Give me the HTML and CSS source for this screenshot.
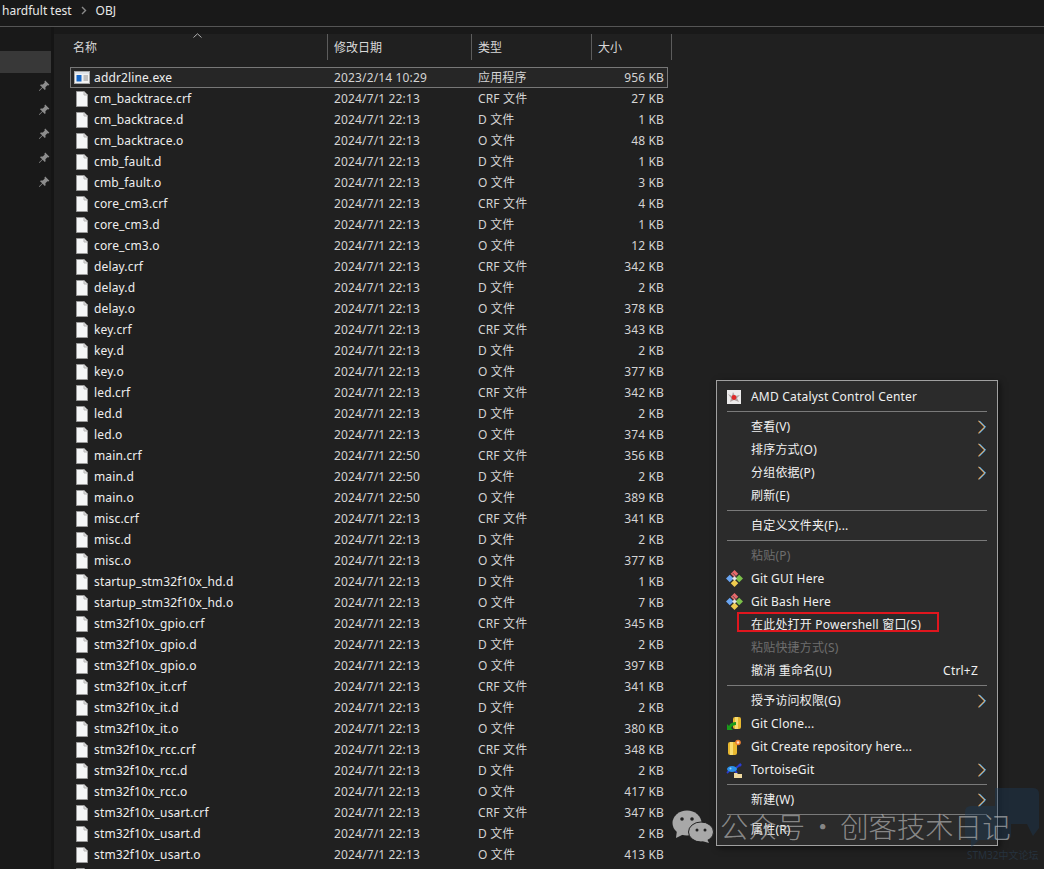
FILE: index.html
```html
<!DOCTYPE html>
<html lang="zh-CN">
<head>
  <meta charset="UTF-8">
  <title>OBJ - File Explorer</title>
  <link rel="stylesheet" href="styles.css">
</head>
<body>

<svg class="defs" width="0" height="0" aria-hidden="true">
  <symbol id="doc" viewBox="0 0 12 16">
    <path d="M.5.5H8L11.5 4V15.5H.5Z" fill="#f5f6f7" stroke="#9a9a9a"/>
    <path d="M8 .5V4H11.5" fill="#e0e0e0" stroke="#b5b5b5"/>
  </symbol>
  <symbol id="pin" viewBox="0 0 12 12">
    <path d="M7.2.6 11.4 4.8 10.3 5.6 9.4 5.2 7.4 7.2 7.6 9.2 6.8 10 4.6 7.7 1.4 11 .9 10.6 4.2 7.3 2 5.2 2.8 4.4 4.8 4.6 6.8 2.6 6.4 1.7Z" fill="#8d8d8d"/>
  </symbol>
  <symbol id="chev" viewBox="0 0 8 14">
    <path d="M.8 .8 7 7 .8 13.200" fill="none" stroke="#ee9a3a" stroke-width="1" transform="translate(-.6 0)"/>
    <path d="M.8 .8 7 7 .8 13.200" fill="none" stroke="#58b4f0" stroke-width="1" transform="translate(.6 0)"/>
    <path d="M.8 .8 7 7 .8 13.200" fill="none" stroke="#e8e8e8" stroke-width=".5"/>
  </symbol>
  <symbol id="git" viewBox="0 0 18 18">
    <path d="M9 0 13 4 9 8 5 4Z" fill="#e8686a"/>
    <path d="M4 5 8 9 4 13 0 9Z" fill="#6aa5f2"/>
    <path d="M14 5 18 9 14 13 10 9Z" fill="#7cc04a"/>
    <path d="M9 10 13 14 9 18 5 14Z" fill="#efcb4e"/>
    <path d="M9 6.500 11.500 9 9 11.500 6.500 9Z" fill="#e4e4e4"/>
    <path d="M7 3 11 7" stroke="#555" stroke-width="1"/>
  </symbol>
</svg>

<header class="crumbs">
  <span>hardfult test</span>
  <svg class="crumb-sep" width="6" height="9" viewBox="0 0 6 9"><path d="M1 1 4.500 4.500 1 8" fill="none" stroke="#8a8a8a" stroke-width="1.400"/></svg>
  <span>OBJ</span>
</header>

<div class="explorer">
  <nav class="side">
    <div class="side-current"></div>
    <div class="side-item"><svg class="pin"><use href="#pin"/></svg></div>
    <div class="side-item"><svg class="pin"><use href="#pin"/></svg></div>
    <div class="side-item"><svg class="pin"><use href="#pin"/></svg></div>
    <div class="side-item"><svg class="pin"><use href="#pin"/></svg></div>
    <div class="side-item"><svg class="pin"><use href="#pin"/></svg></div>
  </nav>

  <main class="files">
    <div class="head">
      <div class="head-cell head-name">名称<svg class="sort" width="9" height="5" viewBox="0 0 9 5"><path d="M.5 4.500 4.500 .8 8.500 4.500" fill="none" stroke="#b0b0b0"/></svg></div>
      <div class="head-cell head-date">修改日期</div>
      <div class="head-cell head-type">类型</div>
      <div class="head-cell head-size">大小</div>
    </div>

    <div class="list">
      <div class="row selected">
        <span class="name"><svg class="exe" width="16" height="13" viewBox="0 0 16 13"><rect x=".5" y=".5" width="15" height="12" fill="#f2f2f2" stroke="#a8a8a8"/><rect x="1" y="1" width="14" height="2" fill="#dfe4ea"/><rect x="2.500" y="4" width="5" height="6.500" fill="#1466c8"/><path d="M9.500 5H14M9.500 7H14M9.500 9H14" stroke="#8c8c8c"/></svg>addr2line.exe</span>
        <span>2023/2/14 10:29</span><span>应用程序</span><span class="size">956 KB</span>
      </div>
      <div class="row"><span class="name"><svg class="doc"><use href="#doc"/></svg>cm_backtrace.crf</span><span>2024/7/1 22:13</span><span>CRF 文件</span><span class="size">27 KB</span></div>
      <div class="row"><span class="name"><svg class="doc"><use href="#doc"/></svg>cm_backtrace.d</span><span>2024/7/1 22:13</span><span>D 文件</span><span class="size">1 KB</span></div>
      <div class="row"><span class="name"><svg class="doc"><use href="#doc"/></svg>cm_backtrace.o</span><span>2024/7/1 22:13</span><span>O 文件</span><span class="size">48 KB</span></div>
      <div class="row"><span class="name"><svg class="doc"><use href="#doc"/></svg>cmb_fault.d</span><span>2024/7/1 22:13</span><span>D 文件</span><span class="size">1 KB</span></div>
      <div class="row"><span class="name"><svg class="doc"><use href="#doc"/></svg>cmb_fault.o</span><span>2024/7/1 22:13</span><span>O 文件</span><span class="size">3 KB</span></div>
      <div class="row"><span class="name"><svg class="doc"><use href="#doc"/></svg>core_cm3.crf</span><span>2024/7/1 22:13</span><span>CRF 文件</span><span class="size">4 KB</span></div>
      <div class="row"><span class="name"><svg class="doc"><use href="#doc"/></svg>core_cm3.d</span><span>2024/7/1 22:13</span><span>D 文件</span><span class="size">1 KB</span></div>
      <div class="row"><span class="name"><svg class="doc"><use href="#doc"/></svg>core_cm3.o</span><span>2024/7/1 22:13</span><span>O 文件</span><span class="size">12 KB</span></div>
      <div class="row"><span class="name"><svg class="doc"><use href="#doc"/></svg>delay.crf</span><span>2024/7/1 22:13</span><span>CRF 文件</span><span class="size">342 KB</span></div>
      <div class="row"><span class="name"><svg class="doc"><use href="#doc"/></svg>delay.d</span><span>2024/7/1 22:13</span><span>D 文件</span><span class="size">2 KB</span></div>
      <div class="row"><span class="name"><svg class="doc"><use href="#doc"/></svg>delay.o</span><span>2024/7/1 22:13</span><span>O 文件</span><span class="size">378 KB</span></div>
      <div class="row"><span class="name"><svg class="doc"><use href="#doc"/></svg>key.crf</span><span>2024/7/1 22:13</span><span>CRF 文件</span><span class="size">343 KB</span></div>
      <div class="row"><span class="name"><svg class="doc"><use href="#doc"/></svg>key.d</span><span>2024/7/1 22:13</span><span>D 文件</span><span class="size">2 KB</span></div>
      <div class="row"><span class="name"><svg class="doc"><use href="#doc"/></svg>key.o</span><span>2024/7/1 22:13</span><span>O 文件</span><span class="size">377 KB</span></div>
      <div class="row"><span class="name"><svg class="doc"><use href="#doc"/></svg>led.crf</span><span>2024/7/1 22:13</span><span>CRF 文件</span><span class="size">342 KB</span></div>
      <div class="row"><span class="name"><svg class="doc"><use href="#doc"/></svg>led.d</span><span>2024/7/1 22:13</span><span>D 文件</span><span class="size">2 KB</span></div>
      <div class="row"><span class="name"><svg class="doc"><use href="#doc"/></svg>led.o</span><span>2024/7/1 22:13</span><span>O 文件</span><span class="size">374 KB</span></div>
      <div class="row"><span class="name"><svg class="doc"><use href="#doc"/></svg>main.crf</span><span>2024/7/1 22:50</span><span>CRF 文件</span><span class="size">356 KB</span></div>
      <div class="row"><span class="name"><svg class="doc"><use href="#doc"/></svg>main.d</span><span>2024/7/1 22:50</span><span>D 文件</span><span class="size">2 KB</span></div>
      <div class="row"><span class="name"><svg class="doc"><use href="#doc"/></svg>main.o</span><span>2024/7/1 22:50</span><span>O 文件</span><span class="size">389 KB</span></div>
      <div class="row"><span class="name"><svg class="doc"><use href="#doc"/></svg>misc.crf</span><span>2024/7/1 22:13</span><span>CRF 文件</span><span class="size">341 KB</span></div>
      <div class="row"><span class="name"><svg class="doc"><use href="#doc"/></svg>misc.d</span><span>2024/7/1 22:13</span><span>D 文件</span><span class="size">2 KB</span></div>
      <div class="row"><span class="name"><svg class="doc"><use href="#doc"/></svg>misc.o</span><span>2024/7/1 22:13</span><span>O 文件</span><span class="size">377 KB</span></div>
      <div class="row"><span class="name"><svg class="doc"><use href="#doc"/></svg>startup_stm32f10x_hd.d</span><span>2024/7/1 22:13</span><span>D 文件</span><span class="size">1 KB</span></div>
      <div class="row"><span class="name"><svg class="doc"><use href="#doc"/></svg>startup_stm32f10x_hd.o</span><span>2024/7/1 22:13</span><span>O 文件</span><span class="size">7 KB</span></div>
      <div class="row"><span class="name"><svg class="doc"><use href="#doc"/></svg>stm32f10x_gpio.crf</span><span>2024/7/1 22:13</span><span>CRF 文件</span><span class="size">345 KB</span></div>
      <div class="row"><span class="name"><svg class="doc"><use href="#doc"/></svg>stm32f10x_gpio.d</span><span>2024/7/1 22:13</span><span>D 文件</span><span class="size">2 KB</span></div>
      <div class="row"><span class="name"><svg class="doc"><use href="#doc"/></svg>stm32f10x_gpio.o</span><span>2024/7/1 22:13</span><span>O 文件</span><span class="size">397 KB</span></div>
      <div class="row"><span class="name"><svg class="doc"><use href="#doc"/></svg>stm32f10x_it.crf</span><span>2024/7/1 22:13</span><span>CRF 文件</span><span class="size">341 KB</span></div>
      <div class="row"><span class="name"><svg class="doc"><use href="#doc"/></svg>stm32f10x_it.d</span><span>2024/7/1 22:13</span><span>D 文件</span><span class="size">2 KB</span></div>
      <div class="row"><span class="name"><svg class="doc"><use href="#doc"/></svg>stm32f10x_it.o</span><span>2024/7/1 22:13</span><span>O 文件</span><span class="size">380 KB</span></div>
      <div class="row"><span class="name"><svg class="doc"><use href="#doc"/></svg>stm32f10x_rcc.crf</span><span>2024/7/1 22:13</span><span>CRF 文件</span><span class="size">348 KB</span></div>
      <div class="row"><span class="name"><svg class="doc"><use href="#doc"/></svg>stm32f10x_rcc.d</span><span>2024/7/1 22:13</span><span>D 文件</span><span class="size">2 KB</span></div>
      <div class="row"><span class="name"><svg class="doc"><use href="#doc"/></svg>stm32f10x_rcc.o</span><span>2024/7/1 22:13</span><span>O 文件</span><span class="size">417 KB</span></div>
      <div class="row"><span class="name"><svg class="doc"><use href="#doc"/></svg>stm32f10x_usart.crf</span><span>2024/7/1 22:13</span><span>CRF 文件</span><span class="size">347 KB</span></div>
      <div class="row"><span class="name"><svg class="doc"><use href="#doc"/></svg>stm32f10x_usart.d</span><span>2024/7/1 22:13</span><span>D 文件</span><span class="size">2 KB</span></div>
      <div class="row"><span class="name"><svg class="doc"><use href="#doc"/></svg>stm32f10x_usart.o</span><span>2024/7/1 22:13</span><span>O 文件</span><span class="size">413 KB</span></div>
      <div class="row"><span class="name"><svg class="doc"><use href="#doc"/></svg></span></div>
    </div>
  </main>
</div>

<!-- right click menu -->
<div class="menu">
  <div class="item">
    <span class="ico"><svg width="14" height="14" viewBox="0 0 14 14"><rect width="14" height="14" fill="#ecebeb"/><path d="M1 4 5 6 6 2 8 6 13 5 10 8 12 12 7 10 3 12 4 8Z" fill="#b0a4a4"/><circle cx="7" cy="7.500" r="2.400" fill="#e02828"/></svg></span>
    <span class="label">AMD Catalyst Control Center</span>
  </div>
  <div class="sep"></div>
  <div class="item"><span class="ico"></span><span class="label">查看(V)</span><svg class="chev"><use href="#chev"/></svg></div>
  <div class="item"><span class="ico"></span><span class="label">排序方式(O)</span><svg class="chev"><use href="#chev"/></svg></div>
  <div class="item"><span class="ico"></span><span class="label">分组依据(P)</span><svg class="chev"><use href="#chev"/></svg></div>
  <div class="item"><span class="ico"></span><span class="label">刷新(E)</span></div>
  <div class="sep"></div>
  <div class="item"><span class="ico"></span><span class="label">自定义文件夹(F)...</span></div>
  <div class="sep"></div>
  <div class="item off"><span class="ico"></span><span class="label">粘贴(P)</span></div>
  <div class="item"><span class="ico"><svg width="17" height="17"><use href="#git"/></svg></span><span class="label">Git GUI Here</span></div>
  <div class="item"><span class="ico"><svg width="17" height="17"><use href="#git"/></svg></span><span class="label">Git Bash Here</span></div>
  <div class="item"><span class="ico"></span><span class="label">在此处打开 Powershell 窗口(S)</span><span class="redbox"></span></div>
  <div class="item off"><span class="ico"></span><span class="label">粘贴快捷方式(S)</span></div>
  <div class="item"><span class="ico"></span><span class="label">撤消 重命名(U)</span><span class="keys">Ctrl+Z</span></div>
  <div class="sep"></div>
  <div class="item"><span class="ico"></span><span class="label">授予访问权限(G)</span><svg class="chev"><use href="#chev"/></svg></div>
  <div class="item">
    <span class="ico"><svg width="16" height="16" viewBox="0 0 16 16"><rect x="7" y="1" width="8" height="12" rx="2" fill="#e8b830"/><rect x="9" y="1" width="3" height="12" fill="#f7dc70"/><path d="M1 14V8L3 10C4 7 7 6 10 6V9C8 9 6 10 5 12L7 14Z" fill="#1a9a1a"/></svg></span>
    <span class="label">Git Clone...</span>
  </div>
  <div class="item">
    <span class="ico"><svg width="16" height="16" viewBox="0 0 16 16"><rect x="2" y="3" width="9" height="13" rx="2" fill="#e8b830"/><rect x="4" y="3" width="3" height="13" fill="#f7dc70"/><circle cx="12" cy="3.500" r="2.800" fill="#f08030"/><circle cx="12" cy="3.500" r="1.200" fill="#fde0c0"/></svg></span>
    <span class="label">Git Create repository here...</span>
  </div>
  <div class="item">
    <span class="ico"><svg width="16" height="16" viewBox="0 0 16 16"><path d="M1 11 3 9M9 9 11 11M10 6 15 2" stroke="#2a3cd0" stroke-width="1.800"/><ellipse cx="6" cy="7" rx="5" ry="3" fill="#2a90e8"/><circle cx="4.500" cy="6.500" r="1" fill="#9ad4f8"/><circle cx="14" cy="3" r="1.500" fill="#2a3cd0"/><path d="M8 11H11L12 12H16V16H8Z" fill="#efd9a0"/></svg></span>
    <span class="label">TortoiseGit</span><svg class="chev"><use href="#chev"/></svg>
  </div>
  <div class="sep"></div>
  <div class="item"><span class="ico"></span><span class="label">新建(W)</span><svg class="chev"><use href="#chev"/></svg></div>
  <div class="sep"></div>
  <div class="item"><span class="ico"></span><span class="label">属性(R)</span></div>
</div>

<!-- image watermarks laid over the screenshot -->
<svg class="mark-bubbles" width="74" height="66" viewBox="0 0 74 66">
  <path d="M30 2H68Q74 2 74 8V42L68 50 62 38H46L38 20H30Z" fill="#1c3a58"/>
  <path d="M6 20H40Q46 20 46 26V48Q46 54 40 54H14L6 62V54Q0 54 0 48V26Q0 20 6 20Z" fill="#1c3a58"/>
</svg>
<div class="mark-forum">STM32中文论坛</div>

<div class="mark">
  <svg width="42" height="33" viewBox="0 0 42 33">
    <ellipse cx="15" cy="13" rx="14.500" ry="12.500" fill="#a8a8a8"/>
    <path d="M5 20 4 28 12 24Z" fill="#a8a8a8"/>
    <ellipse cx="29" cy="22" rx="12.500" ry="10" fill="#a8a8a8" stroke="#1f1f1f"/>
    <path d="M35 29 37 33 30 31Z" fill="#a8a8a8"/>
    <circle cx="10" cy="9" r="1.800" fill="#202020"/><circle cx="20" cy="9" r="1.800" fill="#202020"/>
    <circle cx="25" cy="20" r="1.500" fill="#202020"/><circle cx="33" cy="20" r="1.500" fill="#202020"/>
  </svg>
  <span>公众号</span>
  <span class="mark-dot">·</span>
  <span>创客技术日记</span>
</div>

</body>
</html>
```

FILE: styles.css
```css
* {
  box-sizing: border-box;
}

html, body {
  height: 100%;
}

body {
  margin: 0;
  overflow: hidden;
  background: #191919;
  color: #e4e4e4;
  font-family: "Noto Sans", "Noto Sans CJK SC", sans-serif;
  font-size: 12px;
  position: relative;
}

.defs {
  position: absolute;
}

/* breadcrumb */
.crumbs {
  height: 27px;
  padding: 0 0 6px 2px;
  display: flex;
  align-items: center;
  gap: 9px;
  font-size: 12px;
  color: #e8e8e8;
  background: #191919;
  border-bottom: 1px solid #555;
}

.explorer {
  display: flex;
  height: 842px;
}

/* left tree */
.side {
  width: 54px;
  flex: none;
  padding-top: 24px;
  border-right: 3px solid #151515;
}

.side-current {
  height: 22px;
  margin-bottom: 1px;
  background: #383838;
}

.side-item {
  height: 24px;
  padding-right: 1px;
  display: flex;
  align-items: center;
  justify-content: flex-end;
}

.pin {
  width: 12px;
  height: 12px;
}

/* file list */
.files {
  flex: 1;
  margin-top: 7px;
  background: #202020;
}

.head {
  height: 26px;
  padding-left: 12px;
  display: flex;
  color: #d8d8d8;
}

.head-cell {
  display: flex;
  align-items: center;
  padding: 0 0 1px 6px;
  border-right: 1px solid #5c5c5c;
  position: relative;
}

.head-name { width: 262px; padding-left: 7px; }
.head-date { width: 144px; }
.head-type { width: 120px; }
.head-size { width: 80px; }

.sort {
  position: absolute;
  left: 127px;
  top: -1px;
}

.list {
  padding: 7px 0 0 16px;
}

.row {
  width: 598px;
  height: 21px;
  display: grid;
  grid-template-columns: 264px 144px 120px 70px;
  align-items: center;
  color: #d4d4d4;
  line-height: 16px;
  letter-spacing: .15px;
  white-space: nowrap;
}

.row.selected {
  outline: 1px solid #777;
  outline-offset: -1px;
  background: #262626;
}

.name {
  display: flex;
  align-items: center;
  color: #eeeeee;
  padding-left: 6px;
}

.doc {
  width: 12px;
  height: 16px;
  margin-right: 6px;
  flex: none;
}

.exe {
  margin: 0 4px 0 -2px;
  flex: none;
}

.size {
  text-align: right;
  padding-right: 4px;
}

/* context menu */
.menu {
  position: absolute;
  left: 716px;
  top: 380px;
  width: 282px;
  padding: 4px 0;
  background: #2b2b2b;
  border: 1px solid #a0a0a0;
  box-shadow: 2px 2px 6px rgba(0, 0, 0, .5);
  color: #f0f0f0;
}

.item {
  height: 23px;
  display: flex;
  align-items: center;
  position: relative;
  line-height: 16px;
  letter-spacing: .2px;
}

.ico {
  width: 34px;
  flex: none;
  display: flex;
  justify-content: center;
}

.label {
  flex: 1;
  white-space: nowrap;
}

.off {
  color: #6e6e6e;
}

.keys {
  margin-right: 19px;
}

.chev {
  width: 8px;
  height: 14px;
  margin-right: 11px;
  flex: none;
}

.sep {
  height: 1px;
  margin: 3px 10px;
  background: #7a7a7a;
}

.redbox {
  position: absolute;
  left: 20px;
  top: -1px;
  width: 202px;
  height: 20px;
  border: 2px solid #e0161e;
}

/* watermarks */
.mark {
  position: absolute;
  left: 672px;
  top: 808px;
  display: flex;
  align-items: center;
  color: rgba(190, 190, 190, .65);
  font-size: 28.400px;
  line-height: 36px;
  white-space: nowrap;
  font-family: "Noto Sans CJK SC", sans-serif;
  font-weight: 300;
}

.mark svg {
  margin-right: 6px;
}

.mark-dot {
  width: 35px;
  text-align: center;
}

.mark-bubbles {
  position: absolute;
  left: 965px;
  top: 786px;
  opacity: .4;
}

.mark-forum {
  position: absolute;
  left: 967px;
  top: 847px;
  font-size: 10px;
  color: #26323e;
  white-space: nowrap;
}
```
